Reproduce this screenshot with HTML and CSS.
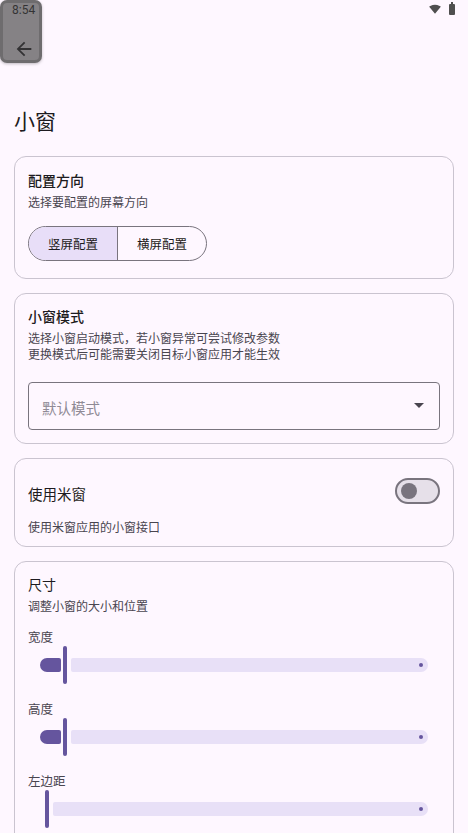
FILE: index.html
```html
<!DOCTYPE html>
<html lang="zh-CN">
<head>
<meta charset="utf-8">
<title>小窗</title>
<link rel="stylesheet" href="styles.css">
</head>
<body>
<div class="screen">
  <div class="status-bar">
    <span class="time">8:54</span>
    <span class="status-icons">
      <svg class="wifi" viewBox="0 0 24 20" width="12" height="10"><path d="M12 19.5L23.6 5.5C23.15 5.16 18.67 1.5 12 1.5S.85 5.16.4 5.5L12 19.5z" fill="#4f4f4f"/></svg>
      <span class="battery"></span>
    </span>
  </div>
  <div class="toolbar">
    <svg class="back" viewBox="0 0 24 24" width="22" height="22"><path d="M20 11H7.83l5.59-5.59L12 4l-8 8 8 8 1.41-1.41L7.83 13H20v-2z" fill="#1d1b20"/></svg>
  </div>
  <div class="focus-overlay"></div>

  <h1 class="page-title">小窗</h1>

  <div class="cards">
    <section class="card card-orient">
      <div class="card-title strong">配置方向</div>
      <div class="card-sub">选择要配置的屏幕方向</div>
      <div class="segmented">
        <div class="seg seg-on">竖屏配置</div>
        <div class="seg">横屏配置</div>
      </div>
    </section>

    <section class="card card-mode">
      <div class="card-title strong">小窗模式</div>
      <div class="card-sub">
        <div class="sub-line">选择小窗启动模式，若小窗异常可尝试修改参数</div>
        <div class="sub-line">更换模式后可能需要关闭目标小窗应用才能生效</div>
      </div>
      <div class="dropdown">
        <span class="placeholder">默认模式</span>
        <span class="caret"></span>
      </div>
    </section>

    <section class="card card-mi">
      <div class="switch-row">
        <span class="switch-label">使用米窗</span>
        <span class="switch"><span class="knob"></span></span>
      </div>
      <div class="card-sub mi-sub">使用米窗应用的小窗接口</div>
    </section>

    <section class="card card-size">
      <div class="card-title">尺寸</div>
      <div class="card-sub">调整小窗的大小和位置</div>

      <div class="slider-label first">宽度</div>
      <div class="slider">
        <span class="track-active" style="width:21px"></span>
        <span class="handle"></span>
        <span class="track-rest"><span class="stop"></span></span>
      </div>

      <div class="slider-label">高度</div>
      <div class="slider">
        <span class="track-active" style="width:21px"></span>
        <span class="handle"></span>
        <span class="track-rest"><span class="stop"></span></span>
      </div>

      <div class="slider-label">左边距</div>
      <div class="slider slider-zero">
        <span class="handle"></span>
        <span class="track-rest"><span class="stop"></span></span>
      </div>
    </section>
  </div>
</div>
</body>
</html>
```

FILE: styles.css
```css
* { box-sizing: border-box; }

html, body {
  margin: 0;
  padding: 0;
  background: #fef7ff;
}

body {
  font-family: "Noto Sans CJK SC", "Noto Sans", Roboto, sans-serif;
  color: #1d1b20;
}

.screen {
  position: relative;
  width: 468px;
  height: 833px;
  overflow: hidden;
  background: #fef7ff;
}

.status-bar {
  height: 24px;
  display: flex;
  justify-content: space-between;
  align-items: flex-start;
  padding: 3px 13px 0 12px;
}

.time {
  font-family: Roboto, "Noto Sans", sans-serif;
  font-size: 12px;
  line-height: 14px;
  color: #1d1b20;
}

.status-icons {
  display: flex;
  align-items: flex-start;
  gap: 8px;
  padding-top: 1px;
}

.wifi { display: block; }

.battery {
  position: relative;
  display: block;
  width: 6px;
  height: 11px;
  background: #4f4f4f;
  border-radius: 1px;
}

.battery::before {
  content: "";
  position: absolute;
  top: -2px;
  left: 2px;
  width: 2px;
  height: 2px;
  background: #4f4f4f;
}

.toolbar {
  height: 50px;
  display: flex;
  align-items: center;
  padding-left: 13px;
}

.back { display: block; }

.focus-overlay {
  position: absolute;
  left: 0;
  top: 0;
  width: 42px;
  height: 63px;
  border-radius: 7px;
  background: rgba(64, 64, 64, 0.64);
  box-shadow: inset 0 0 0 3px rgba(30, 30, 30, 0.22), 0 1px 3px rgba(0, 0, 0, 0.25);
}

.page-title {
  margin: 32px 0 0 14px;
  font-size: 21px;
  line-height: 28px;
  font-weight: 400;
  color: #1d1b20;
}

.cards {
  margin-top: 22px;
  padding: 0 14px;
  display: flex;
  flex-direction: column;
  gap: 14px;
}

.card {
  border: 1px solid #cac4d0;
  border-radius: 12px;
  background: #fef7ff;
  padding: 13px 13px 17px;
}

.card-title {
  font-size: 14px;
  line-height: 20px;
  color: #1d1b20;
}

.card-title.strong { font-weight: 500; }

.card-sub {
  margin-top: 4px;
  font-size: 12px;
  line-height: 16px;
  color: #49454f;
}

.sub-line {
  height: 16px;
  white-space: nowrap;
}

/* segmented */
.segmented {
  margin-top: 16px;
  width: 179px;
  height: 35px;
  display: flex;
  border: 1px solid #79747e;
  border-radius: 18px;
  overflow: hidden;
}

.seg {
  flex: 1;
  display: flex;
  align-items: center;
  justify-content: center;
  font-size: 12.5px;
  color: #1d1b20;
}

.seg-on {
  background: #e8def8;
  border-right: 1px solid #79747e;
}

/* dropdown */
.card-mode { padding: 12px 13px 13px; }

.dropdown {
  margin-top: 20px;
  height: 48px;
  border: 1px solid #79747e;
  border-radius: 4px;
  display: flex;
  align-items: center;
  justify-content: space-between;
  padding: 0 15px 0 13px;
}

.placeholder {
  font-size: 14.5px;
  color: #8f8a95;
  margin-top: 2px;
}

.caret {
  width: 0;
  height: 0;
  border-left: 5px solid transparent;
  border-right: 5px solid transparent;
  border-top: 5px solid #49454f;
  margin-top: -2px;
}

/* switch */
.card-mi { padding: 13px 13px 11px; }

.switch-row {
  height: 40px;
  display: flex;
  align-items: center;
  justify-content: space-between;
}

.switch-label {
  font-size: 14.5px;
  line-height: 20px;
  margin-top: 3px;
}

.switch {
  width: 45px;
  height: 26px;
  border: 2px solid #79747e;
  border-radius: 13px;
  background: #e6e0e9;
  display: flex;
  align-items: center;
  padding-left: 4px;
  margin-top: -2px;
}

.knob {
  width: 16px;
  height: 16px;
  border-radius: 50%;
  background: #79747e;
}

.mi-sub { margin-top: 7px; }

/* sliders */
.card-size { padding: 12px 13px 40px; }

.slider-label {
  margin-top: 17px;
  font-size: 12.5px;
  line-height: 16px;
  color: #49454f;
}

.slider-label.first { margin-top: 15px; }

.slider {
  margin-top: 1px;
  height: 38px;
  display: flex;
  align-items: center;
  padding: 0 12px;
}

.slider-zero { padding-left: 17px; }

.track-active {
  height: 14px;
  background: #65559e;
  border-radius: 7px 2px 2px 7px;
}

.handle {
  width: 4px;
  height: 38px;
  border-radius: 2px;
  background: #65559e;
  margin: 0 4px 0 2px;
}

.slider-zero .handle { margin-left: 0; }

.track-rest {
  flex: 1;
  height: 14px;
  border-radius: 2px 7px 7px 2px;
  background: #e8e0f7;
  display: flex;
  align-items: center;
  justify-content: flex-end;
  padding-right: 5px;
}

.stop {
  width: 4px;
  height: 4px;
  border-radius: 50%;
  background: #65559e;
}
```
